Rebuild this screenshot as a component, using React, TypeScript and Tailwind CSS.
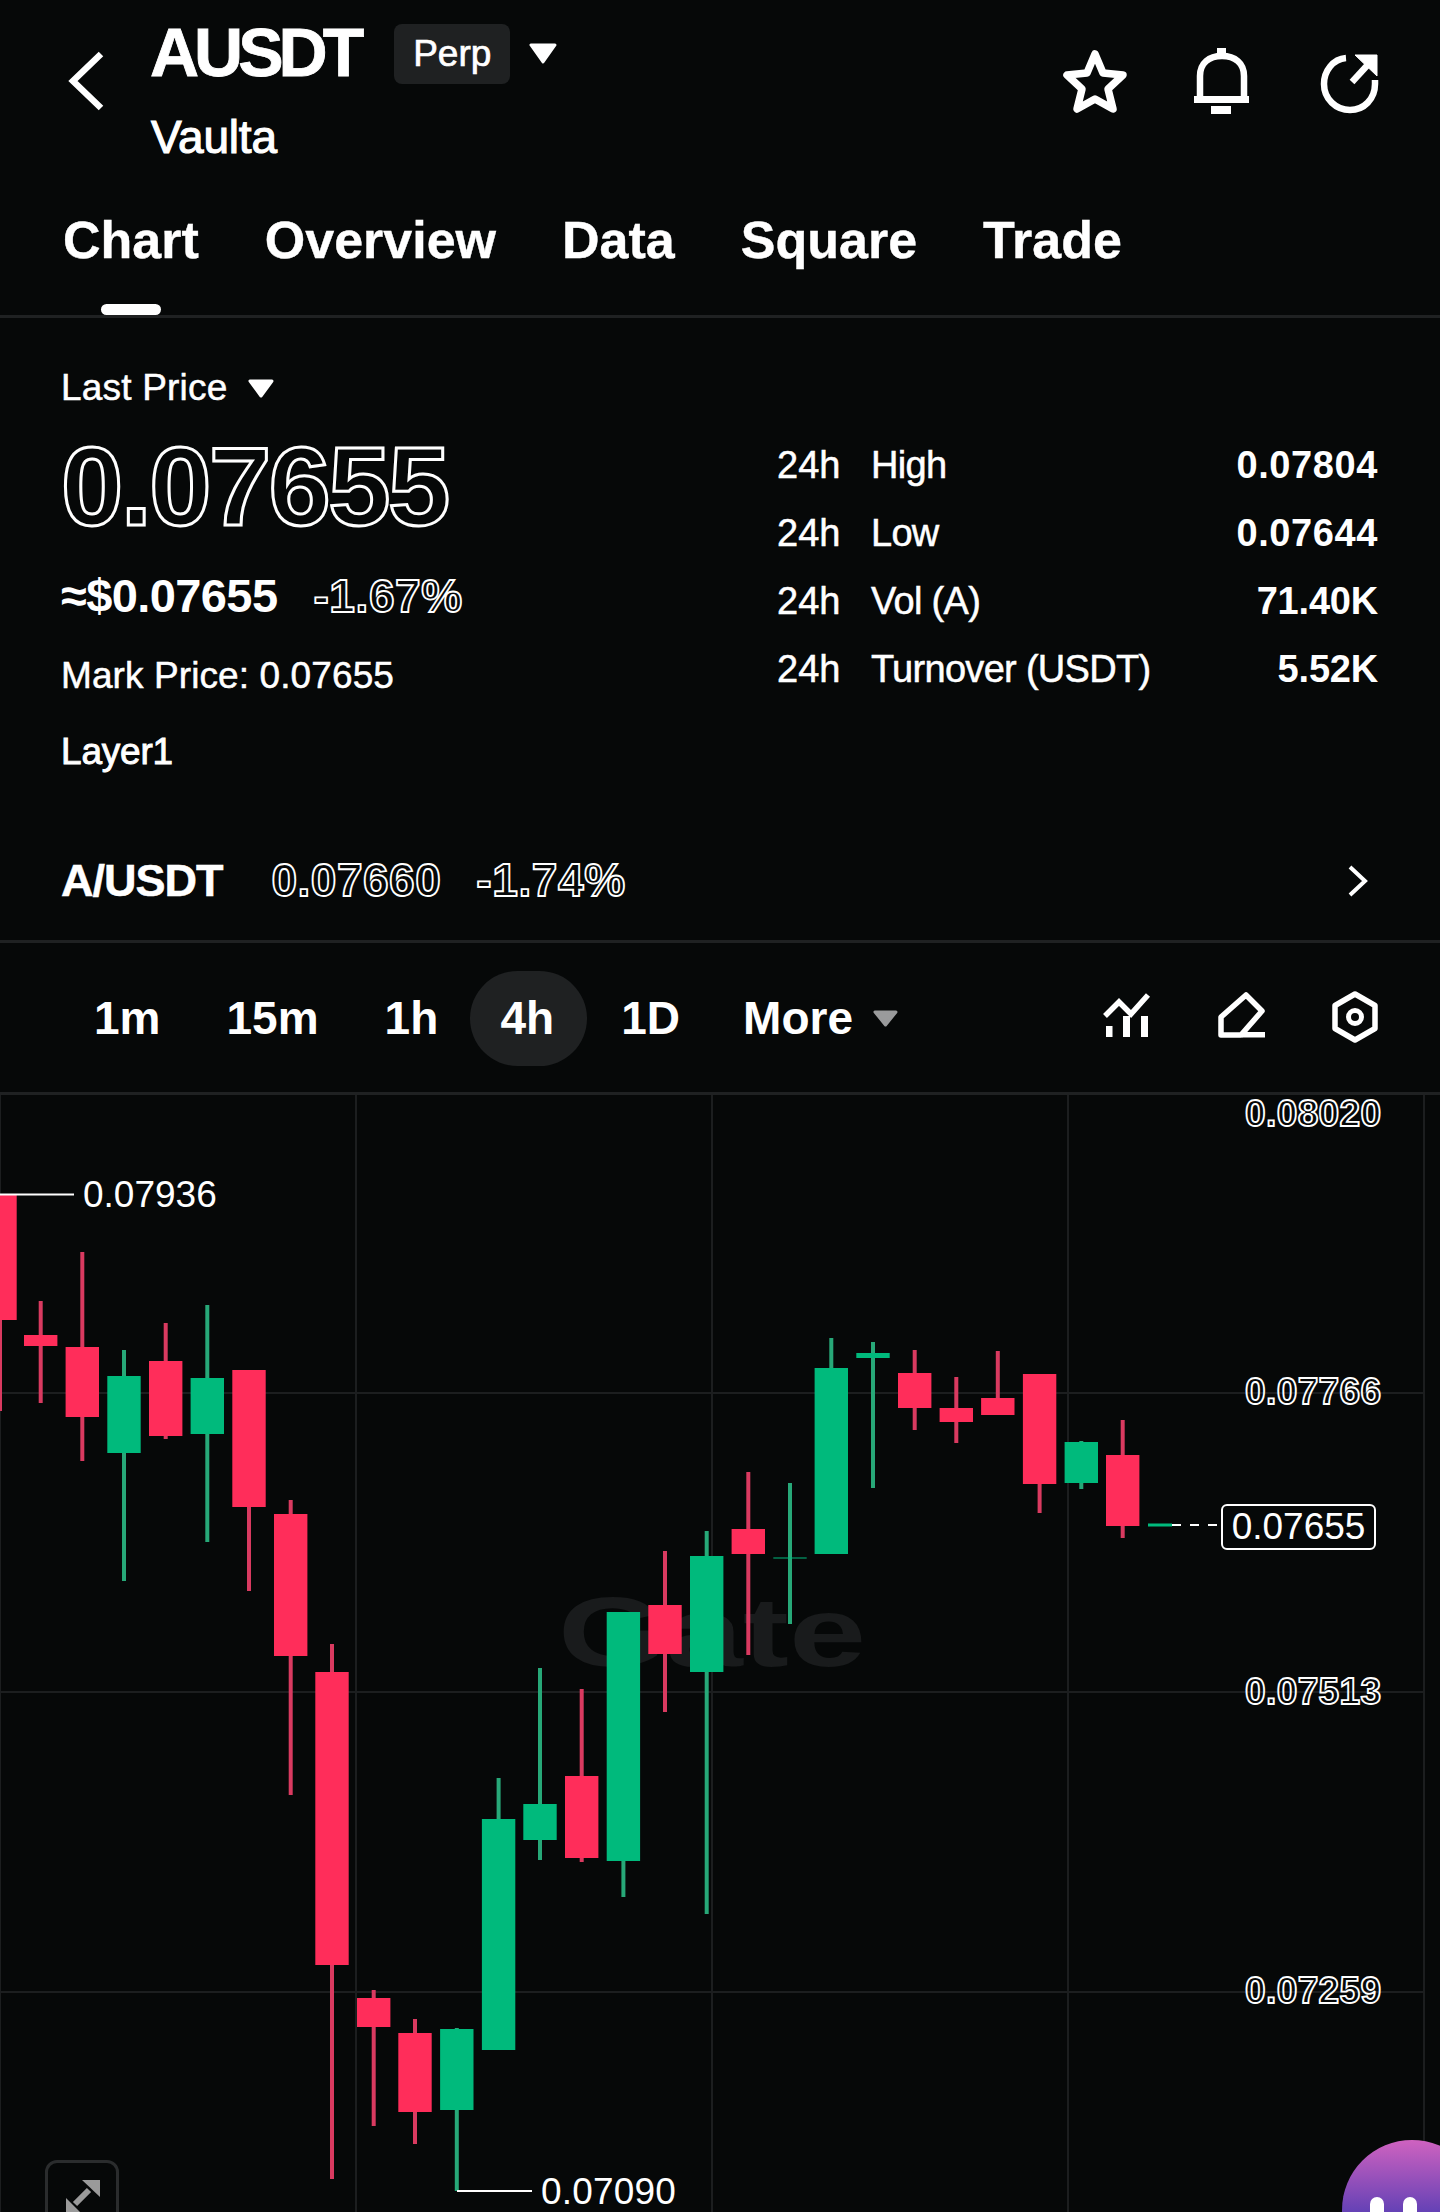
const SANS = "font-['Liberation_Sans',Arial,sans-serif]";

type C = { x: number; g?: boolean; wt: number; wb: number; bt: number; bb: number };
const candles: C[] = [
  { x: 0, wt: 1195, wb: 1411, bt: 1195, bb: 1320 },
  { x: 40.7, wt: 1301, wb: 1403, bt: 1335, bb: 1346 },
  { x: 82.3, wt: 1252, wb: 1461, bt: 1347, bb: 1417 },
  { x: 124, g: true, wt: 1350, wb: 1581, bt: 1376, bb: 1453 },
  { x: 165.7, wt: 1323, wb: 1439, bt: 1361, bb: 1436 },
  { x: 207.3, g: true, wt: 1305, wb: 1542, bt: 1378, bb: 1434 },
  { x: 249, wt: 1370, wb: 1591, bt: 1370, bb: 1507 },
  { x: 290.7, wt: 1500, wb: 1795, bt: 1514, bb: 1656 },
  { x: 332, wt: 1644, wb: 2179, bt: 1672, bb: 1965 },
  { x: 373.7, wt: 1990, wb: 2126, bt: 1998, bb: 2027 },
  { x: 415, wt: 2019, wb: 2144, bt: 2033, bb: 2112 },
  { x: 456.8, g: true, wt: 2028, wb: 2191, bt: 2029, bb: 2110 },
  { x: 498.6, g: true, wt: 1778, wb: 2050, bt: 1819, bb: 2050 },
  { x: 540, g: true, wt: 1668, wb: 1860, bt: 1804, bb: 1840 },
  { x: 581.7, wt: 1689, wb: 1862, bt: 1776, bb: 1858 },
  { x: 623.4, g: true, wt: 1612, wb: 1897, bt: 1612, bb: 1861 },
  { x: 665, wt: 1551, wb: 1712, bt: 1605, bb: 1654 },
  { x: 706.7, g: true, wt: 1531, wb: 1914, bt: 1556, bb: 1672 },
  { x: 748.3, wt: 1472, wb: 1655, bt: 1529, bb: 1554 },
  { x: 790, g: true, wt: 1483, wb: 1624, bt: 1557.5, bb: 1558.5 },
  { x: 831.3, g: true, wt: 1338, wb: 1554, bt: 1368, bb: 1554 },
  { x: 873, g: true, wt: 1342, wb: 1488, bt: 1353, bb: 1358 },
  { x: 914.7, wt: 1350, wb: 1430, bt: 1373, bb: 1408 },
  { x: 956.3, wt: 1377, wb: 1443, bt: 1408, bb: 1422 },
  { x: 997.8, wt: 1351, wb: 1414, bt: 1398, bb: 1415 },
  { x: 1039.6, wt: 1374, wb: 1513, bt: 1374, bb: 1484 },
  { x: 1081.3, g: true, wt: 1441, wb: 1489, bt: 1442, bb: 1483 },
  { x: 1122.7, wt: 1420, wb: 1538, bt: 1455, bb: 1526 },
];

const Tri = ({ w, h, fill = "#ffffff" }: { w: number; h: number; fill?: string }) => (
  <svg width={w} height={h} viewBox={`0 0 ${w} ${h}`} className="block shrink-0">
    <path d={`M2 2H${w - 2}L${w / 2} ${h - 2}Z`} fill={fill} stroke={fill} strokeWidth="3" strokeLinejoin="round" />
  </svg>
);

const Header = () => (
  <div className="relative h-[172px] flex">
    <svg width="40" height="64" viewBox="0 0 40 64" className="mt-[49px] ml-[67px]">
      <path d="M34 5L6 32L34 59" fill="none" stroke="#fff" strokeWidth="6.5" />
    </svg>
    <div className="ml-[43px] flex flex-col">
      <div className="flex items-start">
        <span className="mt-[13px] text-[68px] leading-[78px] font-bold tracking-[-5px] text-white [-webkit-text-stroke:0.8px_white]">AUSDT</span>
        <span className="ml-[35px] mt-[24px] w-[116px] h-[60px] rounded-lg bg-[#1f2122] flex items-center justify-center text-[37px] text-white [-webkit-text-stroke:0.7px_white]">Perp</span>
        <span className="ml-[19px] mt-[43px]"><Tri w={28} h={21} /></span>
      </div>
      <span className="mt-[20px] ml-[1px] text-[46px] leading-[52px] tracking-[-0.2px] text-white [-webkit-text-stroke:1.1px_white]">Vaulta</span>
    </div>
    <div className="ml-auto mr-[60px] mt-[46px] flex">
      <svg width="70" height="70" viewBox="0 0 70 70">
        <path d="M35 8L43 27L63 29L48 43L53 63L35 53L17 63L22 43L7 29L27 27Z" fill="none" stroke="#fff" strokeWidth="7.5" strokeLinejoin="round" />
      </svg>
      <svg width="58" height="70" viewBox="0 0 58 70" className="ml-[63px]">
        <path d="M7 53V30C7 17 16 10 29 10C42 10 51 17 51 30V53" fill="none" stroke="#fff" strokeWidth="6.5" />
        <path d="M1 50H56V57H1ZM18 60H38V68H18ZM24 2H33V11H24Z" fill="#fff" />
      </svg>
      <svg width="60" height="70" viewBox="0 0 60 70" className="ml-[69px]">
        <path d="M26 12C13 13 4 25 4 38C4 53 16 64 30 64C44 64 55 53 55 38V34" fill="none" stroke="#fff" strokeWidth="6.5" />
        <path d="M32 36L54 12" fill="none" stroke="#fff" strokeWidth="6.5" />
        <path d="M35 9H57V30Z" fill="#fff" stroke="#fff" strokeWidth="1" strokeLinejoin="round" />
      </svg>
    </div>
  </div>
);

const Tabs = () => (
  <div className="relative h-[146px] border-b-[3px] border-[#1f2122] px-[63px] flex items-start gap-[66px] text-[52px] leading-[60px] font-bold text-white [-webkit-text-stroke:0.4px_white]">
    {["Chart", "Overview", "Data", "Square", "Trade"].map((t) => (
      <span key={t} className="mt-[38px]">{t}</span>
    ))}
    <span className="absolute left-[101px] bottom-0 w-[60px] h-[11px] rounded-full bg-white" />
  </div>
);

const rows = [
  ["High", "0.07804", "tracking-[0.6px]"],
  ["Low", "0.07644", "tracking-[0.6px]"],
  ["Vol (A)", "71.40K", "tracking-[-0.2px]"],
  ["Turnover (USDT)", "5.52K", "tracking-[-0.2px]"],
];

const Outline = ({ t, cls }: { t: string; cls: string }) => <span className={`text-transparent font-bold ${cls}`}>{t}</span>;

const Price = () => (
  <div className="h-[625px] border-b-[3px] border-[#1f2122] relative text-white">
    <div className="flex">
      <div className="pl-[61px] w-[777px] flex flex-col">
        <div className="mt-[47px] flex items-center gap-[20px] text-[37px] leading-[46px]">
          <span className="tracking-[0.2px] [-webkit-text-stroke:0.5px_white]">Last Price</span>
          <Tri w={26} h={19} />
        </div>
        <Outline t="0.07655" cls="mt-[16px] text-[112px] leading-[120px] tracking-[-2.6px] [-webkit-text-stroke:3px_white]" />
        <div className="mt-[21px] flex items-center leading-[56px]">
          <span className="text-[47px] font-bold tracking-[-0.6px]">≈$0.07655</span>
          <Outline t="-1.67%" cls="ml-[36px] text-[46px] tracking-[0.6px] [-webkit-text-stroke:1.8px_white]" />
        </div>
        <span className="mt-[29px] text-[37px] leading-[46px] tracking-[0.1px] [-webkit-text-stroke:0.5px_white]">Mark Price: 0.07655</span>
        <span className="mt-[30px] text-[37px] leading-[46px] tracking-[-0.2px] [-webkit-text-stroke:0.9px_white]">Layer1</span>
      </div>
      <div className="mt-[113px] w-[601px] flex flex-col text-[38px] leading-[68px]">
        {rows.map(([l, v, tr]) => (
          <div key={l} className="flex justify-between">
            <span className="flex [-webkit-text-stroke:0.5px_white]"><span className="w-[94px]">24h</span><span className="tracking-[-0.7px]">{l}</span></span>
            <span className={`font-bold ${tr}`}>{v}</span>
          </div>
        ))}
      </div>
    </div>
    <div className="absolute left-[61px] right-[71px] top-[528px] flex items-center">
      <span className="text-[45px] leading-[56px] font-bold tracking-[-1px] [-webkit-text-stroke:0.5px_white]">A/USDT</span>
      <Outline t="0.07660" cls="ml-[49px] text-[46px] tracking-[0.5px] [-webkit-text-stroke:1.8px_white]" />
      <Outline t="-1.74%" cls="ml-[35px] text-[46px] tracking-[0.6px] [-webkit-text-stroke:1.8px_white]" />
      <svg width="22" height="34" viewBox="0 0 22 34" className="ml-auto">
        <path d="M3 3L18 17L3 31" fill="none" stroke="#fff" strokeWidth="4" />
      </svg>
    </div>
  </div>
);

const Intervals = () => (
  <div className="h-[152px] border-b-[3px] border-[#1f2122] flex items-center pl-[61px] pr-[60px] text-[46px] font-bold text-white">
    <span className="px-[33px] mt-[1px]">1m</span>
    <span className="px-[33px] mt-[1px]">15m</span>
    <span className="pl-[33px] pr-[32px] mt-[1px]">1h</span>
    <span className="w-[117px] h-[95px] rounded-full bg-[#1f2122] flex items-center justify-center pr-[3px] mt-[1px]">4h</span>
    <span className="pl-[34px] pr-[33px] mt-[1px]">1D</span>
    <span className="pl-[30px] mt-[1px]">More</span>
    <span className="ml-[20px] mt-[1px]"><Tri w={25} h={17} fill="#9a9b9c" /></span>
    <svg width="281" height="54" viewBox="0 0 281 54" className="ml-auto">
      <path d="M6 25L20 11L32 23L49 4" fill="none" stroke="#fff" strokeWidth="5.5" />
      <path d="M7 35H13.5V46H7ZM24 25H31V46H24ZM42 25H49V46H42Z" fill="#fff" />
      <path d="M147 4L163 20L142 44H122V26Z" fill="none" stroke="#fff" strokeWidth="5.5" strokeLinejoin="round" />
      <path d="M143 41H166V46.5H143Z" fill="#fff" />
      <path d="M256 3L276 14.5V37.5L256 49L236 37.5V14.5Z" fill="none" stroke="#fff" strokeWidth="5.5" strokeLinejoin="round" />
      <circle cx="256" cy="26" r="6.5" fill="none" stroke="#fff" strokeWidth="5" />
    </svg>
  </div>
);

const AxisLabel = ({ t, top }: { t: string; top: number }) => (
  <span style={{ top }} className="absolute left-[1245px] text-[37px] leading-[36px] tracking-[0.4px] font-bold text-transparent [-webkit-text-stroke:1.8px_white]">{t}</span>
);

const Chart = () => (
  <div className="relative h-[1117px] text-white">
    <svg width="1440" height="1117" viewBox="0 1095 1440 1117" className="absolute left-0 top-0">
      <g stroke="#1c1e1f" strokeWidth="2">
        {[0, 356, 712, 1068, 1424].map((x) => <line key={x} x1={x} x2={x} y1={1095} y2={2212} />)}
        {[1393, 1692, 1992].map((y) => <line key={y} x1={0} x2={1424} y1={y} y2={y} />)}
      </g>
      <text x="558" y="1666" fontFamily="Liberation Sans" fontWeight="700" fontSize="98" fill="#191b1c" textLength="308" lengthAdjust="spacingAndGlyphs">Gate</text>
      {candles.map((c, i) => (
        <g key={i}>
          <rect x={c.x - 2} y={c.wt} width="4" height={c.wb - c.wt} fill={c.g ? "#27a878" : "#d93a60"} />
          <rect x={c.x - 16.7} y={c.bt} width="33.4" height={c.bb - c.bt} fill={c.g ? "#00ba7c" : "#ff2d5a"} />
        </g>
      ))}
      <line x1="0" x2="74" y1="1194.5" y2="1194.5" stroke="#fff" strokeWidth="2" />
      <line x1="457" x2="532" y1="2191" y2="2191" stroke="#fff" strokeWidth="2" />
      <line x1="1148" x2="1172" y1="1525" y2="1525" stroke="#00ba7c" strokeWidth="3" />
      <line x1="1172" x2="1220" y1="1525" y2="1525" stroke="#fff" strokeWidth="2" strokeDasharray="9 9" />
    </svg>
    <AxisLabel t="0.08020" top={1} />
    <AxisLabel t="0.07766" top={279} />
    <AxisLabel t="0.07513" top={579} />
    <AxisLabel t="0.07259" top={878} />
    <span className="absolute left-[83px] top-[78px] text-[37px] leading-[44px]">0.07936</span>
    <span className="absolute left-[541px] top-[1075px] text-[37px] leading-[44px] tracking-[0.2px]">0.07090</span>
    <span className="absolute left-[1221px] top-[409px] w-[155px] h-[46px] rounded-[6px] border-2 border-white flex items-center justify-center text-[37px]">0.07655</span>
    <div className="absolute left-[45px] top-[1065px] w-[74px] h-[80px] rounded-[12px] border-[3px] border-[#2a2c2d]">
      <svg width="68" height="60" viewBox="0 0 68 60">
        <path d="M41 27L27 41" stroke="#9a9a9a" strokeWidth="6" />
        <path d="M34 17H52V34Z" fill="#9a9a9a" />
        <path d="M18 35V52H35Z" fill="#9a9a9a" />
      </svg>
    </div>
    <div className="absolute left-[1342px] top-[1045px] w-[140px] h-[140px] rounded-full bg-[linear-gradient(180deg,#cf62c0_0,#6040b5_75px)] flex justify-center gap-[19px] pr-[37px] pt-[57px]">
      <span className="w-[14px] h-[30px] rounded-full bg-white" />
      <span className="w-[14px] h-[30px] rounded-full bg-white" />
    </div>
  </div>
);

export default function App() {
  return (
    <div className={`w-[1440px] h-[2212px] overflow-hidden bg-[#060808] ${SANS}`}>
      <Header />
      <Tabs />
      <Price />
      <Intervals />
      <Chart />
    </div>
  );
}
